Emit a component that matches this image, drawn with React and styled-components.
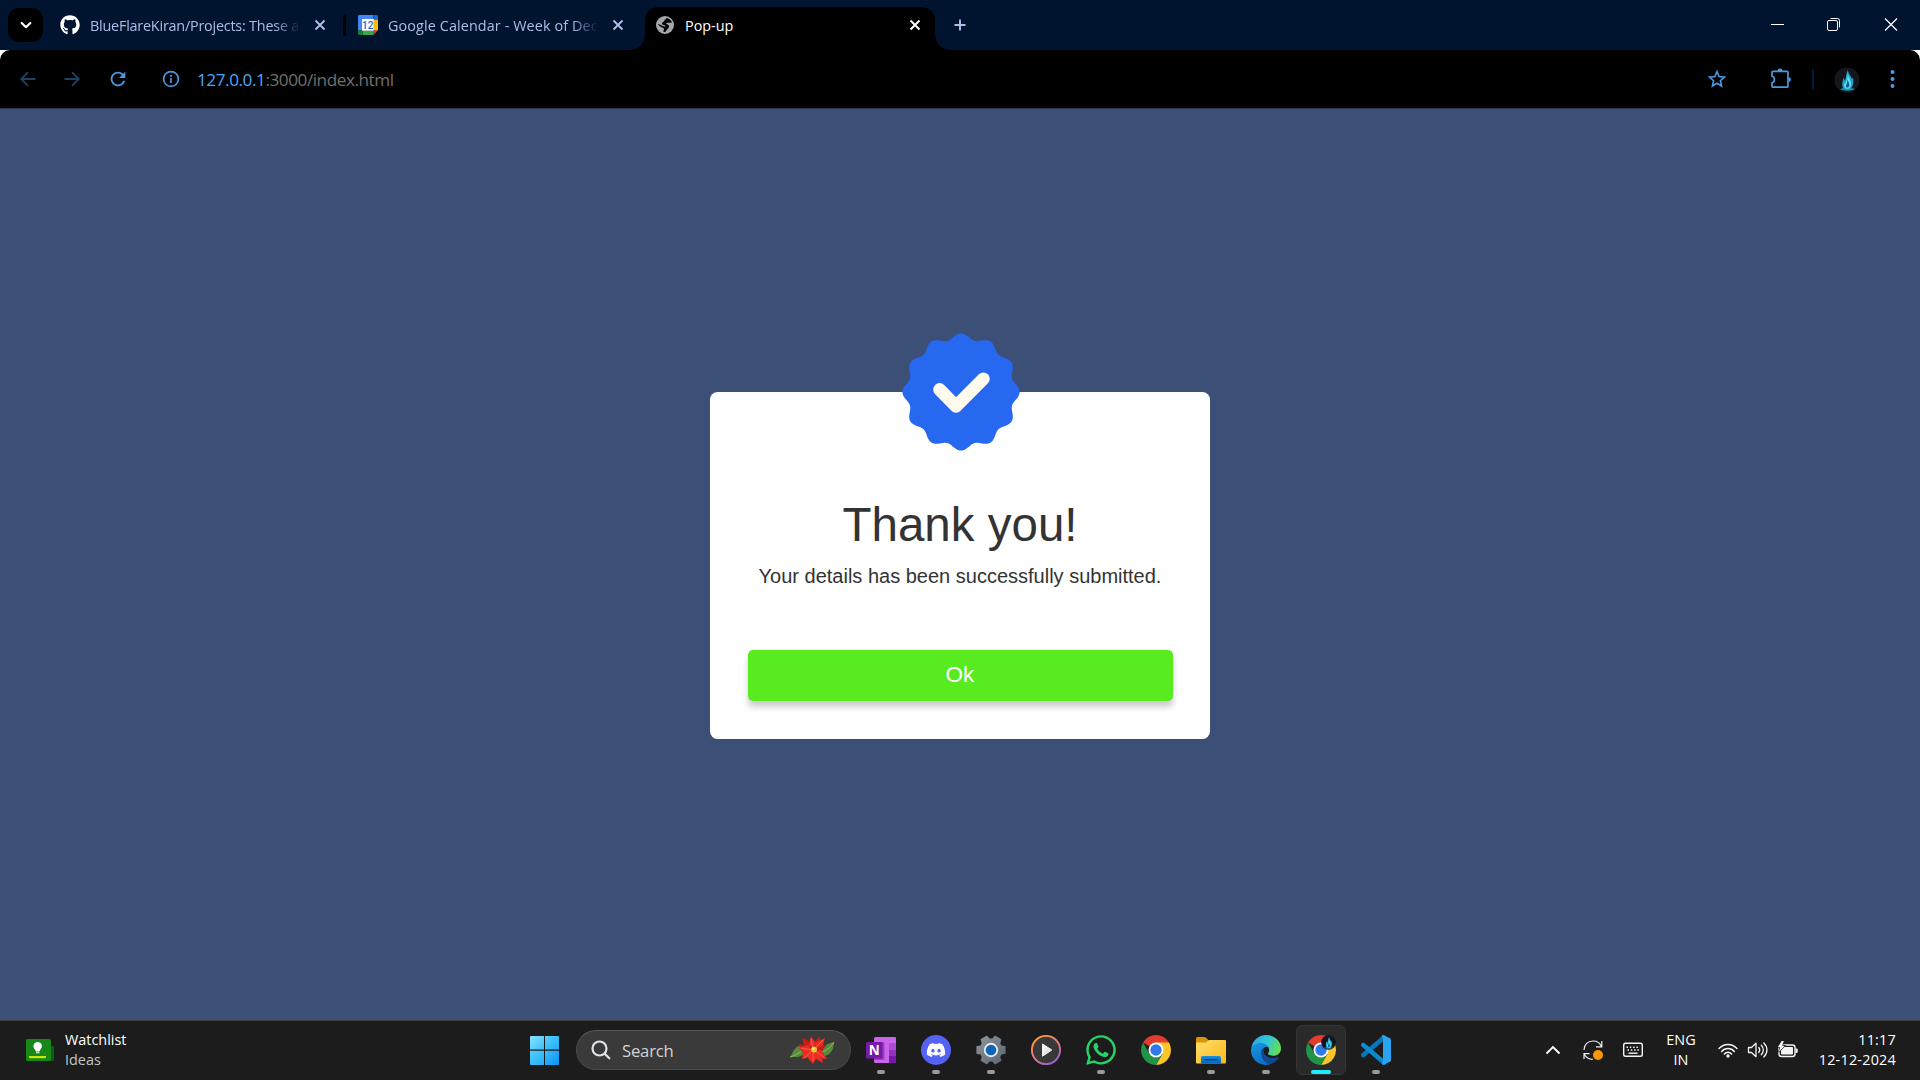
import React from "react";
import styled, { createGlobalStyle, css } from "styled-components";
import { FaGithub, FaDiscord, FaWhatsapp } from "react-icons/fa";
import { MdRefresh } from "react-icons/md";

const GlobalStyle = createGlobalStyle`
  * { box-sizing: border-box; }
  body { margin: 0; overflow: hidden; background: #3c5077; }
  button { font: inherit; border: 0; margin: 0; padding: 0; background: none; color: inherit; }
  svg { display: block; flex: none; }
`;

const Screen = styled.div`
  width: 1920px;
  height: 1080px;
  display: flex;
  flex-direction: column;
  font-family: "Open Sans", "Noto Sans", sans-serif;
`;

/* ---------- browser chrome ---------- */

const TabStrip = styled.header`
  height: 50px;
  flex: none;
  display: flex;
  align-items: stretch;
  background: #001430;
  color: #a9bfe8;
`;

const TabSearch = styled.button`
  width: 35px;
  height: 34px;
  margin: 8px 5px 0 8px;
  border-radius: 11px;
  background: #000;
  color: #fff;
  display: grid;
  place-items: center;
`;

const Tab = styled.div`
  position: relative;
  width: ${(p) => p.$width}px;
  padding: 0 ${(p) => p.$right}px 0 ${(p) => p.$left}px;
  display: flex;
  align-items: center;
  gap: 10px;
  ${(p) =>
    p.$active &&
    css`
      height: 43px;
      margin-top: 7px;
      padding-bottom: 7px;
      background: #000;
      color: #fff;
      border-radius: 13px 13px 0 0;
      &::before,
      &::after {
        content: "";
        position: absolute;
        bottom: 0;
        width: 15px;
        height: 15px;
      }
      &::before {
        left: -15px;
        background: radial-gradient(circle at 0 0, transparent 14.5px, #000 15px);
      }
      &::after {
        right: -15px;
        background: radial-gradient(circle at 100% 0, transparent 14.5px, #000 15px);
      }
    `}
`;

const TabTitle = styled.span`
  flex: 1;
  min-width: 0;
  padding-top: 2px;
  white-space: nowrap;
  font-size: 14.4px;
  line-height: 20px;
  letter-spacing: ${(p) => p.$spacing || 0}px;
  ${(p) =>
    p.$fade &&
    css`
      mask-image: linear-gradient(to right, #000 calc(100% - 26px), transparent);
    `}
`;

const TabDivider = styled.i`
  width: 3px;
  height: 21px;
  margin-top: 15px;
  border-radius: 2px;
  background: #000;
`;

const NewTab = styled.button`
  margin-left: 15px;
  width: 20px;
`;

const WindowControls = styled.div`
  margin-left: auto;
  display: flex;
  color: #fff;
`;

const WindowButton = styled.button`
  width: 57px;
  padding-right: 1px;
  display: grid;
  place-items: center;
`;

const ToolbarBack = styled.div`
  height: 59px;
  flex: none;
  background: #fff;
`;

const Toolbar = styled.nav`
  height: 59px;
  display: flex;
  align-items: center;
  padding: 0 16px 1px 16px;
  background: #000;
  border-bottom: 1px solid #26344f;
  border-radius: 10px 10px 0 0;
  color: #4a9ae0;
`;

const ToolButton = styled.button`
  width: 24px;
  height: 24px;
  display: grid;
  place-items: center;
  margin-right: ${(p) => p.$after || 0}px;
  color: ${(p) => (p.$dim ? "#1d4162" : "inherit")};
`;

const Address = styled.div`
  flex: 1;
  padding-top: 2px;
  font-size: 17.2px;
  line-height: 24px;
  letter-spacing: -0.46px;
  color: #707070;
  b { font-weight: 400; color: #4ba6fb; }
`;

const ToolbarDivider = styled.i`
  width: 2px;
  height: 20px;
  margin: 0 20px 0 19px;
  background: #001a3a;
`;

/* ---------- page ---------- */

const Page = styled.main`
  flex: 1;
  min-height: 0;
  background: #3c5077;
  display: flex;
  justify-content: center;
  align-items: flex-start;
  padding-top: 282.6px;
`;

const Popup = styled.section`
  width: 500px;
  height: 347.2px;
  padding: 0 37.5px 37.5px;
  border-radius: 7.5px;
  background: #fff;
  color: #333;
  text-align: center;
  display: flex;
  flex-direction: column;
  align-items: stretch;
  font-family: "Liberation Sans", Arial, sans-serif;
`;

const Badge = styled.div`
  margin: -58.6px auto 0;
  width: 117px;
  height: 118px;
`;

const Title = styled.h2`
  margin: 45.6px 0 0;
  font-size: 47.5px;
  font-weight: 400;
  line-height: 55px;
`;

const Message = styled.p`
  margin: 13px -10px 0;
  font-size: 20px;
  line-height: 23px;
`;

const OkButton = styled.button`
  margin-top: auto;
  height: 51.3px;
  padding-bottom: 2px;
  border-radius: 5px;
  background: #58eb20;
  color: #fff;
  font-size: 22.5px;
  box-shadow: 0 6px 6px rgba(0, 0, 0, 0.2);
`;

/* ---------- taskbar ---------- */

const Taskbar = styled.footer`
  height: 60px;
  flex: none;
  display: flex;
  align-items: center;
  padding-bottom: 1px;
  background: #1c1c1c;
  border-top: 1px solid #414141;
  color: #fff;
`;

const Widget = styled.div`
  width: 517px;
  padding: 0 0 1px 26px;
  display: flex;
  align-items: center;
  gap: 11px;
`;

const Lines = styled.div`
  display: flex;
  flex-direction: column;
  align-items: ${(p) => p.$align || "flex-start"};
  font-size: 14.4px;
  line-height: 20px;
  letter-spacing: ${(p) => p.$spacing || 0}px;
`;

const Muted = styled.span`
  color: #c4c4c4;
`;

const AppButton = styled.button`
  width: 55px;
  height: 50px;
  display: flex;
  justify-content: center;
`;

const AppTile = styled.span`
  width: 50px;
  height: 50px;
  display: flex;
  flex-direction: column;
  align-items: center;
  padding-top: ${(p) => (p.$active ? 9 : 10)}px;
  border-radius: 6px;
  border: ${(p) => (p.$active ? "1px solid #353535" : "0")};
  background: ${(p) => (p.$active ? "#2a2a2a" : "transparent")};
`;

const Indicator = styled.i`
  width: ${(p) => (p.$active ? 20 : 8)}px;
  height: 4px;
  margin-top: 5px;
  border-radius: 2px;
  background: ${(p) => (p.$active ? "#22eaff" : "#9a9a9a")};
`;

const SearchBox = styled.div`
  width: 275px;
  height: 40px;
  margin: 0 2px 0 4px;
  padding: 0 15px 0 14px;
  display: flex;
  align-items: center;
  gap: 11px;
  border-radius: 20px;
  background: #3a3a3a;
  border: 1px solid #484848;
  border-top-color: #595959;
  color: #d2d2d2;
  font-size: 16.7px;
  letter-spacing: -0.2px;
  span { flex: 1; }
`;

const Tray = styled.div`
  margin-left: auto;
  padding-right: 24px;
  display: flex;
  align-items: center;
`;

const TrayItem = styled.div`
  width: ${(p) => p.$width}px;
  display: flex;
  justify-content: ${(p) => p.$justify || "center"};
`;

/* ---------- drawings ---------- */

const Stroke = ({ size = 20, w = 1.6, d, color = "currentColor", cap = "round" }) => (
  <svg width={size} height={size} viewBox={`0 0 ${size} ${size}`} fill="none" stroke={color} strokeWidth={w} strokeLinecap={cap} strokeLinejoin={cap === "round" ? "round" : "miter"}>
    <path d={d} />
  </svg>
);

const CloseIcon = () => <Stroke w={1.9} cap="butt" d="M5.5 5.5L14.5 14.5M14.5 5.5L5.5 14.5" />;

const CalendarIcon = () => (
  <svg width="20" height="20" viewBox="0 0 20 20">
    <path d="M1.4 0H15.3V4.7H4.7V15.3H0V1.4A1.4 1.4 0 0 1 1.4 0Z" fill="#4285f4" />
    <path d="M15.3 0H18.6A1.4 1.4 0 0 1 20 1.4V4.7H15.3Z" fill="#1967d2" />
    <path d="M15.3 4.7H20V15.3H15.3Z" fill="#fbbc04" />
    <path d="M4.7 15.3H15.3V20H4.7Z" fill="#34a853" />
    <path d="M0 15.3H4.7V20H1.4A1.4 1.4 0 0 1 0 18.6Z" fill="#188038" />
    <path d="M15.3 15.3H20L15.3 20Z" fill="#ea4335" />
    <path d="M4 4H15.7V15.7H4Z" fill="#fff" />
    <text x="9.8" y="13.7" textAnchor="middle" fontSize="10" fontWeight="500" fontFamily="Roboto, sans-serif" fill="#1a66d0">12</text>
  </svg>
);

const GlobeIcon = () => (
  <svg width="20" height="20" viewBox="0 0 20 20">
    <circle cx="10" cy="10" r="9" fill="#a3a6ab" />
    <path d="M11.2 2.9C14 3.3 16.2 5 17 7.2C15.5 8.2 13.8 7.400 12.200 7.700C10.800 8 11.200 9.100 12.500 9.400C14.200 9.800 14.600 11.500 13.400 13C12.200 14.200 11.300 15.600 10.200 17.100C9 17 8.200 16.500 8 16C9.600 15 9.400 13.600 8.200 12.900C6 12 4.400 11.300 2.900 9.600C3.600 8.800 4.600 9.400 5.800 10C7.500 10.800 9.200 11.900 10.600 11.500C10.800 10.300 8.600 10.500 7.500 9.600C6.500 8.600 7 7.200 8.500 6.800C9.800 6.400 9 5.200 10 4.600C10.800 4.200 11.300 3.800 11.200 2.900Z" fill="#050505" />
  </svg>
);

const Flame = ({ size }) => (
  <svg width={size} height={size} viewBox="0 0 26 26">
    <circle cx="13" cy="13" r="12.6" fill="#15151d" />
    <ellipse cx="13.500" cy="22.300" rx="7" ry="1.500" fill="#178fb4" />
    <path d="M13.800 3C14.200 6.500 17 9 18 12L19 10.500C19.800 14 19.300 17 18.500 19C17.500 21.500 15.600 22.600 13.400 22.600C10.600 22.600 8.200 20.500 8.200 17.200C8.200 15 9.200 13.500 9.200 11C10.300 12 10.700 13 10.900 14C12.300 10.500 11.800 7 13.800 3Z" fill="#1aa6cc" />
    <path d="M13.900 6.500C14.100 10.500 17 13 17 17C17 20 15.500 21.800 13.400 21.800C11 21.800 9.700 20 10.200 17.500C11.700 16.500 13.500 12 13.900 6.500Z" fill="#62e2f3" />
    <path d="M13.600 12C14.200 14.500 15.300 16 15.300 18C15.300 19.600 14.500 20.600 13.400 20.600C12 20.600 11.500 19.600 12 18.200C12.800 17 13.400 15 13.600 12Z" fill="#0d5b8c" />
  </svg>
);

const badgePath = (() => {
  const points = [];
  for (let deg = 0; deg < 360; deg += 1.5) {
    const a = (deg * Math.PI) / 180;
    const r = 55.7 + 2.9 * Math.cos(12 * a);
    points.push(`${(59 + r * Math.sin(a)).toFixed(2)} ${(59 - r * Math.cos(a)).toFixed(2)}`);
  }
  return `M${points.join("L")}Z`;
})();

const VerifiedBadge = () => (
  <svg width="118" height="118" viewBox="0 0 118 118">
    <path d={badgePath} fill="#2668f0" />
    <path d="M37.6 56.5L54 73.3L81.4 45.8" fill="none" stroke="#fffcee" strokeWidth="12.8" strokeLinecap="round" strokeLinejoin="round" />
  </svg>
);

const WatchlistIcon = () => (
  <svg width="28" height="24" viewBox="0 0 28 24">
    <path d="M22 8H27A1 1 0 0 1 28 9V21A2 2 0 0 1 26 23H22Z" fill="#0b5c16" />
    <rect x="0" y="1" width="25" height="22" rx="1.5" fill="#178718" />
    <path d="M11.7 4A4.3 4.3 0 0 0 9 11.6L10 13.4H13.4L14.4 11.6A4.3 4.3 0 0 0 11.7 4Z" fill="#fff" />
    <path d="M10 14H13.4V15.3H10Z" fill="#c7f0c0" />
    <path d="M3 18H20V20.2H3Z" fill="#c8e800" />
  </svg>
);

const StartIcon = () => (
  <svg width="30" height="30" viewBox="0 0 30 30">
    <defs>
      <linearGradient id="win" x1="0" y1="0" x2="30" y2="30" gradientUnits="userSpaceOnUse">
        <stop offset="0" stopColor="#8be3ff" />
        <stop offset=".45" stopColor="#3fc3fc" />
        <stop offset="1" stopColor="#0a90f5" />
      </linearGradient>
    </defs>
    <path d="M1 1H14V14.500H0V2A1 1 0 0 1 1 1ZM15 1H28A1 1 0 0 1 29 2V14.500H15ZM0 15.800H14V30H1A1 1 0 0 1 0 29ZM15 15.800H29V29A1 1 0 0 1 28 30H15Z" fill="url(#win)" />
  </svg>
);

const Poinsettia = () => (
  <svg width="46" height="30" viewBox="0 0 46 30">
    <path d="M1 22C5 17 4 12 13 10L16 18C11 23 7 22 1 22ZM33 12C38 9 41 8 45 7C45 14 42 20 35 21Z" fill="#558c3c" />
    <path d="M1 22C8 20 10 17 15 15M45 7C41 13 38 15 33 17" stroke="#94b86c" strokeWidth="1" fill="none" />
    <path d="M13 3L20 6L22 11L15 12ZM31 1L31 9L26 13L22 10ZM10 9L21 12L19 19L12 16ZM38 10L31 18L25 15L28 10Z" fill="#c81e12" />
    <path d="M22 1L26 7L25 14L20 10ZM36 3L34 10L27 14L26 8ZM9 13L19 10L24 15L15 17ZM38 24L29 23L24 16L32 15ZM13 24L14 17L23 15L21 22ZM24 29L19 23L24 15L28 22ZM34 28L27 24L26 16L32 19Z" fill="#ee2c23" />
    <path d="M24 15L22 4M25 14L34 5M23 15L12 13M23 16L15 23M24 17L24 26M26 16L35 22" stroke="#ff6150" strokeWidth=".9" />
    <circle cx="25" cy="14.5" r="3" fill="#e9c832" />
    <circle cx="24.4" cy="13.6" r="1" fill="#fff06e" />
  </svg>
);

const OneNoteIcon = () => (
  <svg width="30" height="30" viewBox="0 0 30 30">
    <path d="M9.5 2H29A1 1 0 0 1 30 3V27A1 1 0 0 1 29 28H9.5A1.5 1.5 0 0 1 8 26.5V3.5A1.5 1.5 0 0 1 9.5 2Z" fill="#ca64ea" />
    <path d="M23 8H30V15H23Z" fill="#ae4bd5" />
    <path d="M23 15H30V21H23Z" fill="#9332bf" />
    <path d="M23 21H30V27A1 1 0 0 1 29 28H23Z" fill="#7719aa" />
    <path d="M8 7H17A1.5 1.5 0 0 1 18.500 8.500V25H8Z" fill="#5b1685" opacity=".45" />
    <rect x="0" y="7" width="16.500" height="16.500" rx="1.300" fill="#7719aa" />
    <text x="8.200" y="20.100" textAnchor="middle" fontFamily="Open Sans, sans-serif" fontWeight="700" fontSize="13.500" fill="#fff">N</text>
  </svg>
);

const DiscordWrap = styled.span`
  width: 30px;
  height: 30px;
  border-radius: 50%;
  display: grid;
  place-items: center;
  background: #5562f6;
  color: #fff;
`;

function gearPath() {
  const out = [];
  for (let i = 0; i < 8; i += 1) {
    [[-17, 10.6], [-9.5, 14.1], [9.5, 14.1], [17, 10.6]].forEach(([offset, r]) => {
      const a = ((i * 45 + 22.5 + offset) * Math.PI) / 180;
      out.push(`${(15 + r * Math.sin(a)).toFixed(2)} ${(15 - r * Math.cos(a)).toFixed(2)}`);
    });
  }
  return `M${out.join("L")}Z`;
}

/* six broad teeth: two on top, two below, one at each side */
function toothPath() {
  const out = [];
  [30, 90, 150, 210, 270, 330].forEach((center) => {
    [[-21, 10.8], [-13, 14.2], [13, 14.2], [21, 10.8]].forEach(([offset, r]) => {
      const a = ((center + offset) * Math.PI) / 180;
      out.push(`${(15 + r * Math.sin(a)).toFixed(2)} ${(15 - r * Math.cos(a)).toFixed(2)}`);
    });
  });
  return `M${out.join("L")}Z`;
}

const SettingsIcon = ({ teeth = 8 }) => (
  <svg width="30" height="30" viewBox="0 0 30 30">
    <defs>
      <linearGradient id="gear" x1="0" y1="0" x2="1" y2="1">
        <stop offset="0" stopColor="#8d949b" />
        <stop offset="1" stopColor="#5a6672" />
      </linearGradient>
    </defs>
    <path d={teeth === 6 ? toothPath() : gearPath()} fill="url(#gear)" stroke="url(#gear)" strokeWidth="1.500" strokeLinejoin="round" />
    <circle cx="15" cy="15" r="7.200" fill="#e9ecee" />
    <circle cx="15" cy="15" r="5.300" fill="#0c66b5" />
  </svg>
);

const MediaIcon = () => (
  <svg width="30" height="30" viewBox="0 0 30 30">
    <defs>
      <linearGradient id="ring" x1=".2" y1="0" x2=".8" y2="1">
        <stop offset="0" stopColor="#ff9a3e" />
        <stop offset=".5" stopColor="#e07a80" />
        <stop offset="1" stopColor="#9060d8" />
      </linearGradient>
      <linearGradient id="play" x1="0" y1="0" x2="1" y2="1">
        <stop offset="0" stopColor="#fff" />
        <stop offset="1" stopColor="#cfcfcf" />
      </linearGradient>
    </defs>
    <circle cx="15" cy="15" r="14.100" fill="#383838" stroke="url(#ring)" strokeWidth="1.900" />
    <path d="M11.500 9L20.800 15L11.500 21.200Z" fill="url(#play)" stroke="#f2f2f2" strokeWidth="1" strokeLinejoin="round" />
  </svg>
);

const ChromeIcon = () => (
  <svg width="30" height="30" viewBox="0 0 30 30">
    <path d="M15 15L2.010 7.500A15 15 0 0 1 27.990 7.500Z" fill="#e33b2e" />
    <path d="M15 7.500H27.990A15 15 0 0 1 15 30L21.500 18.750Z" fill="#fcc52a" />
    <path d="M2.010 7.500L8.500 18.750L15 22.500L21.500 18.750L15 30A15 15 0 0 1 2.010 7.500Z" fill="#219447" />
    <circle cx="15" cy="15" r="7.500" fill="#fff" />
    <circle cx="15" cy="15" r="5.700" fill="#3079e8" />
  </svg>
);

const ProfileBadge = styled.span`
  position: absolute;
  top: 0;
  right: 0;
`;

const BadgedIcon = styled.span`
  position: relative;
  display: block;
`;

const ExplorerIcon = () => (
  <svg width="30" height="30" viewBox="0 0 30 30">
    <defs>
      <linearGradient id="folder" x1="0" y1="0" x2="1" y2="1">
        <stop offset="0" stopColor="#ffdf70" />
        <stop offset="1" stopColor="#fcb815" />
      </linearGradient>
      <linearGradient id="drawer" x1="0" y1="0" x2="0" y2="1">
        <stop offset="0" stopColor="#168fe4" />
        <stop offset="1" stopColor="#0763b4" />
      </linearGradient>
    </defs>
    <path d="M0 10V3.500A1.500 1.500 0 0 1 1.500 2H9L13 5.500L10 10Z" fill="#dc9500" />
    <path d="M10 7.500L13 5H29A1 1 0 0 1 30 6V27.500A1 1 0 0 1 29 28.500H1A1 1 0 0 1 0 27.500V8.500A1 1 0 0 1 1 7.500Z" fill="url(#folder)" />
    <path d="M5 28.500V23A2 2 0 0 1 7 21H23A2 2 0 0 1 25 23V28.500Z" fill="url(#drawer)" />
    <path d="M9 24.700H21" stroke="#063f80" strokeWidth="1.300" strokeLinecap="round" />
  </svg>
);

const EdgeIcon = () => (
  <svg width="30" height="30" viewBox="0 0 30 30">
    <defs>
      <linearGradient id="edgeTop" x1="0" y1=".3" x2="1" y2=".6">
        <stop offset="0" stopColor="#2aa9e8" />
        <stop offset=".5" stopColor="#34c5d5" />
        <stop offset="1" stopColor="#65e04c" />
      </linearGradient>
      <linearGradient id="edgeLeft" x1="0" y1="0" x2=".5" y2="1">
        <stop offset="0" stopColor="#1899e4" />
        <stop offset="1" stopColor="#0b6fc8" />
      </linearGradient>
    </defs>
    <path d="M.3 13.500C1.300 5.500 7.500 0 15 0C23.800 0 30 6.500 30 13.200C30 18 26.500 20.800 22.300 20.800C19 20.800 16.800 19.600 17 18.400C17.200 17.600 18.200 17 18.200 15C18.200 11.500 14.500 8.500 9.500 8.500C4.500 8.500 1.500 11.200 .3 13.500Z" fill="url(#edgeTop)" />
    <path d="M.1 14.800C.6 10.800 4.400 8.300 9.200 8.300C13.200 8.300 16.500 9.800 17.800 12.200C13 11 10.500 14 10.500 17.800C10.500 23.500 15 28 19 29.300C17.500 30 15.500 30 14.500 30C6.400 29.800-.5 23 .1 14.800Z" fill="url(#edgeLeft)" />
    <path d="M13.500 12.400C11.300 13.300 10.200 15.500 10.200 18C10.200 24 15 28.500 19 29.300C22.500 28.400 26 25.800 27.800 22.500C28.100 21.900 27.600 21.600 27.100 21.900C25.800 22.500 24 23 22 23C16.500 23 12.500 19.800 12.500 15.800C12.500 14.300 12.900 13.200 13.500 12.400Z" fill="#104a93" />
  </svg>
);

const CodeIcon = () => (
  <svg width="30" height="30" viewBox="0 0 30 30">
    <path d="M2.300 20L23 2.500" stroke="#0577bd" strokeWidth="4.600" strokeLinecap="round" />
    <path d="M2.300 10L23 27.500" stroke="#0c8ad0" strokeWidth="4.600" strokeLinecap="round" />
    <path d="M22 0L29 3.300A2 2 0 0 1 30 5V25A2 2 0 0 1 29 26.700L22.500 29.800Q21 30 20.500 28.500L22 27V3L20.500 1.500Q20.800 .2 22 0Z" fill="#2aa4f0" />
    <path d="M22 8.500V21.500L13.600 15Z" fill="#1c1c1c" />
  </svg>
);

const SyncIcon = () => (
  <svg width="22" height="22" viewBox="0 0 22 22" fill="none" stroke="#eee" strokeWidth="1.200">
    <path d="M2 11C2 5.500 6 2 11 2C15 2 18 4 19.500 7.500M19.800 2V7.800H14M2 20V14.600H7.500M2 15C4 18.500 7 20.300 10.800 20.300" />
    <circle cx="16" cy="16" r="5" fill="#ff9800" stroke="none" />
  </svg>
);

const KeyboardIcon = () => (
  <svg width="22" height="18" viewBox="0 0 22 18" fill="none" stroke="#f4f4f4">
    <rect x="1.700" y="2.300" width="18.600" height="13" rx="1.800" strokeWidth="1.400" />
    <path d="M4.500 6.300H17.800M5.500 9H17" strokeWidth="1.500" strokeDasharray="1.500 1.800" />
    <path d="M6.500 12.200H15.500" strokeWidth="1.400" />
  </svg>
);

const WifiIcon = () => (
  <svg width="22" height="18" viewBox="0 0 22 18" fill="none" stroke="#f4f4f4" strokeWidth="1.500" strokeLinecap="round">
    <path d="M2 7.500C7 2 15 2 20 7.500M4.600 10.400C8 6.500 14 6.500 17.400 10.400M7.300 13C9.400 10.500 12.600 10.500 14.700 13" />
    <circle cx="11" cy="15" r="1.700" fill="#f4f4f4" stroke="none" />
  </svg>
);

const VolumeIcon = () => (
  <svg width="22" height="20" viewBox="0 0 22 20" fill="none" stroke="#f4f4f4" strokeWidth="1.300" strokeLinecap="round" strokeLinejoin="round">
    <path d="M1.500 7.500H4.500L9 3.300V16.700L4.500 12.500H1.500ZM11.800 7.500C13 9 13 11 11.800 12.500M14.300 5.200C17 8 17 12 14.300 14.800M16.800 3C21 7 21 13 16.800 17" />
  </svg>
);

const BatteryIcon = () => (
  <svg width="22" height="18" viewBox="0 0 22 18">
    <rect x="2" y="4" width="16" height="11.500" rx="2.500" fill="none" stroke="#f4f4f4" strokeWidth="1.400" />
    <rect x="4" y="6" width="12" height="7.500" rx="1" fill="#f4f4f4" />
    <path d="M18.700 7.500H19.700A1 1 0 0 1 20.700 8.500V11A1 1 0 0 1 19.700 12H18.700Z" fill="#f4f4f4" />
    <path d="M4.600 0L.8 6.300H3.200L1.800 11L7.800 4.700H5.200L6.800 0Z" fill="#f4f4f4" stroke="#1c1c1c" strokeWidth="1.200" paintOrder="stroke" />
  </svg>
);

const WhatsAppWrap = styled.span`
  width: 30px;
  height: 30px;
  display: flex;
  align-items: center;
  justify-content: center;
  color: #25d366;
`;

const apps = [
  { name: "onenote", icon: <OneNoteIcon />, open: true },
  { name: "discord", icon: <DiscordWrap><FaDiscord size={20} /></DiscordWrap>, open: true },
  { name: "settings", icon: <SettingsIcon teeth={6} />, open: true },
  { name: "media", icon: <MediaIcon /> },
  { name: "whatsapp", icon: <WhatsAppWrap><FaWhatsapp size={34} /></WhatsAppWrap>, open: true },
  { name: "chrome", icon: <ChromeIcon /> },
  { name: "explorer", icon: <ExplorerIcon />, open: true },
  { name: "edge", icon: <EdgeIcon />, open: true },
  { name: "chrome-profile", icon: <BadgedIcon><ChromeIcon /><ProfileBadge><Flame size={15} /></ProfileBadge></BadgedIcon>, open: true, active: true },
  { name: "code", icon: <CodeIcon />, open: true },
];

export default function App() {
  return (
    <Screen>
      <GlobalStyle />
      <TabStrip>
        <TabSearch><Stroke w={2.2} d="M5.700 8L10 12.200L14.300 8" /></TabSearch>
        <Tab $width={295} $left={12} $right={13}>
          <FaGithub size={20} color="#fff" />
          <TabTitle $fade $spacing={-0.22}>BlueFlareKiran/Projects: These a</TabTitle>
          <CloseIcon />
        </Tab>
        <TabDivider />
        <Tab $width={299} $left={12} $right={17}>
          <CalendarIcon />
          <TabTitle $fade $spacing={0.1}>Google Calendar - Week of Dec</TabTitle>
          <CloseIcon />
        </Tab>
        <Tab $active $width={290} $left={10} $right={10}>
          <GlobeIcon />
          <TabTitle>Pop-up</TabTitle>
          <CloseIcon />
        </Tab>
        <NewTab><Stroke w={1.900} cap="butt" d="M10 4.500V15.500M4.500 10H15.500" /></NewTab>
        <WindowControls>
          <WindowButton><Stroke w={1} cap="butt" d="M4 9.500H17" /></WindowButton>
          <WindowButton>
            <svg width="20" height="20" viewBox="0 0 20 20" fill="none" stroke="#fff">
              <rect x="3.500" y="5.500" width="10" height="10" rx="1.500" />
              <path d="M6.500 3.500H13.500Q15.500 3.500 15.500 5.500V12.500" />
            </svg>
          </WindowButton>
          <WindowButton><Stroke w={1.200} cap="butt" d="M4 3.500L16 15.500M16 3.500L4 15.500" /></WindowButton>
        </WindowControls>
      </TabStrip>

      <ToolbarBack>
        <Toolbar>
          <ToolButton $dim $after={20}><Stroke w={1.800} cap="butt" d="M17.500 10H4M10 3.200L3.200 10L10 16.800" /></ToolButton>
          <ToolButton $dim $after={22}><Stroke w={1.800} cap="butt" d="M2.500 10H16M10 3.200L16.800 10L10 16.800" /></ToolButton>
          <ToolButton $after={29}><MdRefresh size={22} /></ToolButton>
          <ToolButton $after={14}>
            <svg width="20" height="20" viewBox="0 0 20 20" fill="none" stroke="currentColor" strokeWidth="1.700">
              <circle cx="10" cy="10" r="7.400" />
              <path d="M10 9V14M10 6V7.700" />
            </svg>
          </ToolButton>
          <Address><b>127.0.0.1</b>:3000/index.html</Address>
          <ToolButton $after={40}>
            <Stroke w={1.600} cap="butt" d="M10 2.600L12.100 7.600L17.500 8.100L13.400 11.700L14.600 17L10 14.200L5.400 17L6.600 11.700L2.500 8.100L7.900 7.600Z" />
          </ToolButton>
          <ToolButton>
            <svg width="22" height="22" viewBox="0 0 22 22">
              <path d="M3 3.300H17A1 1 0 0 1 18 4.300V18.200A1 1 0 0 1 17 19.200H3A1 1 0 0 1 2 18.200V14.800C5.200 14 5.200 9 2 8.200V4.300A1 1 0 0 1 3 3.300Z" fill="none" stroke="currentColor" strokeWidth="1.700" />
              <path d="M7.500 3A2.500 2.500 0 0 1 12.500 3ZM18.500 9.200A2.400 2.400 0 0 1 18.500 14Z" fill="currentColor" />
            </svg>
          </ToolButton>
          <ToolbarDivider />
          <ToolButton $after={22}><Flame size={26} /></ToolButton>
          <ToolButton>
            <svg width="20" height="20" viewBox="0 0 20 20" fill="currentColor">
              <circle cx="10.500" cy="3" r="2" /><circle cx="10.500" cy="10" r="2" /><circle cx="10.500" cy="17" r="2" />
            </svg>
          </ToolButton>
        </Toolbar>
      </ToolbarBack>

      <Page>
        <Popup>
          <Badge><VerifiedBadge /></Badge>
          <Title>Thank you!</Title>
          <Message>Your details has been successfully submitted.</Message>
          <OkButton>Ok</OkButton>
        </Popup>
      </Page>

      <Taskbar>
        <Widget>
          <WatchlistIcon />
          <Lines>
            <span>Watchlist</span>
            <Muted>Ideas</Muted>
          </Lines>
        </Widget>
        <AppButton><AppTile><StartIcon /></AppTile></AppButton>
        <SearchBox>
          <svg width="20" height="20" viewBox="0 0 20 20" fill="none" stroke="#dfe3e6" strokeWidth="2.200" strokeLinecap="round">
            <circle cx="8.500" cy="8.500" r="7" /><path d="M13.600 13.600L18.300 18.300" />
          </svg>
          <span>Search</span>
          <Poinsettia />
        </SearchBox>
        {apps.map((app) => (
          <AppButton key={app.name}>
            <AppTile $active={app.active}>
              {app.icon}
              {app.open && <Indicator $active={app.active} />}
            </AppTile>
          </AppButton>
        ))}
        <Tray>
          <TrayItem $width={40}><Stroke w={1.900} cap="butt" d="M3.500 13.500L10 7L16.500 13.500" /></TrayItem>
          <TrayItem $width={40}><SyncIcon /></TrayItem>
          <TrayItem $width={40}><KeyboardIcon /></TrayItem>
          <TrayItem $width={56}><Lines $align="center"><span>ENG</span><span>IN</span></Lines></TrayItem>
          <TrayItem $width={38}><WifiIcon /></TrayItem>
          <TrayItem $width={22}><VolumeIcon /></TrayItem>
          <TrayItem $width={38}><BatteryIcon /></TrayItem>
          <TrayItem $width={89} $justify="flex-end"><Lines $align="flex-end" $spacing={0.22}><span>11:17</span><span>12-12-2024</span></Lines></TrayItem>
        </Tray>
      </Taskbar>
    </Screen>
  );
}
